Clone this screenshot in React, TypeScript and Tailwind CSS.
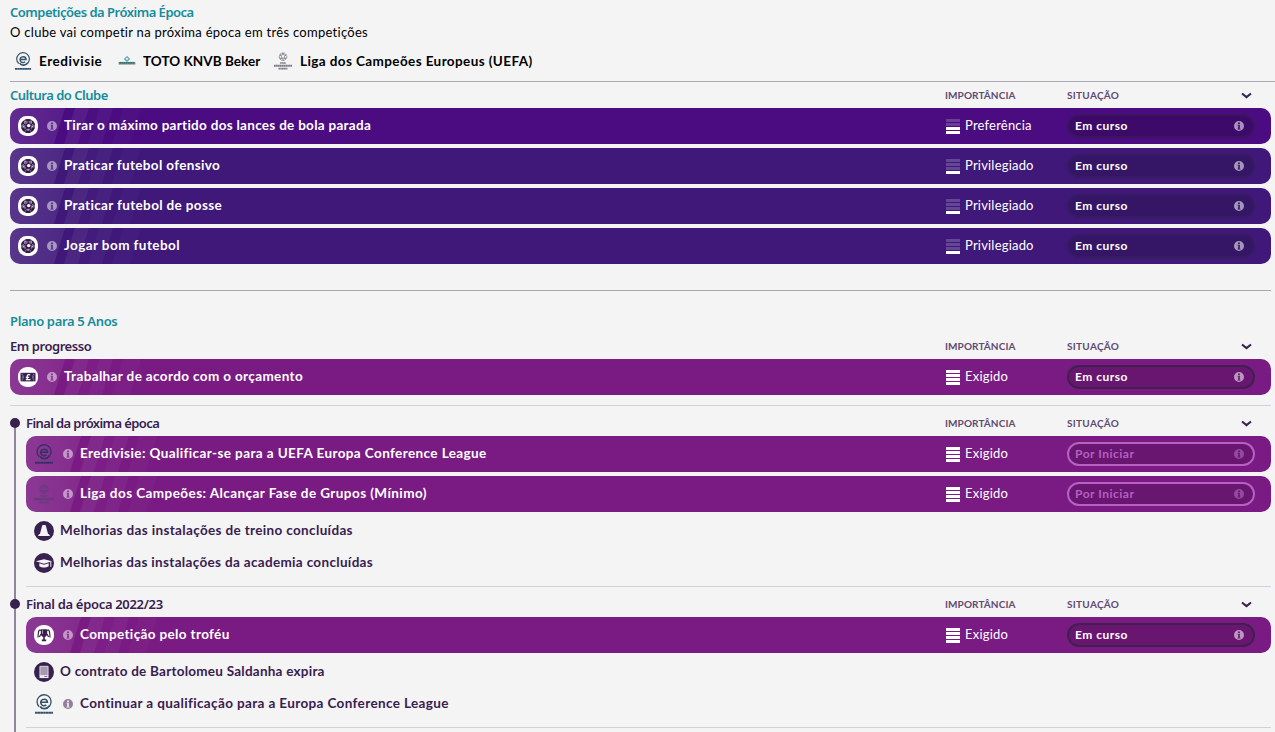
import type { ReactNode } from "react";

type Level = 1 | 2 | 3 | 4;
type Tone = "violet" | "indigo" | "purple";

interface GoalRowProps {
  icon: ReactNode;
  label: string;
  tracking: string;
  tone: Tone;
  importance: string;
  level: Level;
  pending?: boolean;
}

const rowTones: Record<Tone, string> = {
  violet: "bg-[#4a0c80]",
  indigo: "bg-[#3f187a]",
  purple: "bg-[#7a1b84]",
};

const pillTones: Record<Tone, string> = {
  violet: "bg-[#3d0a6a] border-[#38175f]",
  indigo: "bg-[#351566] border-[#371b60]",
  purple: "bg-[#681670] border-[#40204f]",
};

function InfoIcon({ className }: { className: string }) {
  return (
    <svg viewBox="0 0 10 10" className={`size-2.5 shrink-0 ${className}`}>
      <path
        fillRule="evenodd"
        fill="currentColor"
        d="M5 0a5 5 0 1 1 0 10A5 5 0 0 1 5 0ZM4.1 1.4v1.5h1.8V1.4ZM3.5 3.8v.8h.7v3.1h-.7v.9h3v-.9h-.7V3.8Z"
      />
    </svg>
  );
}

function BallIcon() {
  return (
    <svg viewBox="0 0 20 20" className="size-5 shrink-0">
      <rect width="20" height="20" rx="8.5" fill="#fff" />
      <circle cx="10" cy="10" r="7" fill="#7a6789" />
      <g fill="#32194a">
        <path d="m10.4 6.6 3.2 2.4-1.2 3.8H8.4L7.2 9Z" />
        <path d="m6.5 3.9 3.5 1.5 3.5-1.5Q10 1.9 6.5 3.9ZM3 9.5l3-1.9.5-3.4Q3 6 3 9.5ZM17 9.5l-3-1.9-.5-3.4Q17 6 17 9.5ZM3.1 11.2l2.9.6 1.2 2.9-.9 1.3q-2.8-2-3.2-4.8ZM16.9 11.2l-2.9.6-1.2 2.9.9 1.3q2.8-2 3.2-4.8ZM8 14.4h4l.8 2q-2.8 1.2-5.6 0Z" />
      </g>
      <path d="M10.3 5.5v1.6M6 8.2l1.6.9M14 8.2l-1.2.9M7.2 14l1.1-1.6M12.8 14l-.8-1.6" stroke="#32194a" strokeWidth="1" />
      <circle cx="10.7" cy="9.6" r="1.7" fill="#fff" />
      <path d="m6.2 6.2 1.3-.6M13 5.6l1 .7M5 10.6l1.2.4M13.7 11l1.2-.4M9.5 14h1.5" stroke="#e9e4ed" strokeWidth=".8" />
    </svg>
  );
}

function MoneyIcon() {
  return (
    <svg viewBox="0 0 20 20" className="size-5 shrink-0">
      <rect width="20" height="20" rx="9" fill="#fff" />
      <rect x="2.5" y="5.8" width="15" height="8.6" fill="#38204f" />
      <path d="M3.6 7.2h1.2M3.6 13h1.2M15.2 7.2h1.2M15.2 13h1.2M5 8.4v3.4M15 8.4v3.4" stroke="#b6aac0" strokeWidth=".9" />
      <path d="M12 8.3c-.5-1.1-2.8-1-2.8.7v3.4M7.8 10.3h3.4M7.8 12.6h4.6" fill="none" stroke="#fff" strokeWidth="1.2" />
    </svg>
  );
}

function EredivisieLogo({ dim = false, small = false }: { dim?: boolean; small?: boolean }) {
  return (
    <svg
      viewBox="0 0 20 20"
      className={`shrink-0 ${small ? "mx-px size-[18px]" : "size-5"} ${dim ? "text-[#353065]" : "text-[#365269]"}`}
    >
      <g fill="none" stroke="currentColor">
        <path d="M5.2 12.8A7 7 0 1 1 15.6 12" strokeWidth="1.3" />
        <path d="M10 5.2a3.3 3.3 0 1 0 2.3 5.7M7 8.3h6.4A3.3 3.3 0 0 0 10 5.2" strokeWidth="1.6" />
        <path d="M6.2 12.4c2.2 3.4 7 2.8 9.3-.6" strokeWidth="1.9" />
      </g>
      <path d="M1 18.7h18" stroke="currentColor" strokeWidth="1.9" strokeDasharray="2.6 .15" />
    </svg>
  );
}

function ChampionsLogo({ dim = false, small = false }: { dim?: boolean; small?: boolean }) {
  return (
    <svg
      viewBox="0 0 20 20"
      className={`shrink-0 ${small ? "mx-px size-[18px]" : "size-5"} ${dim ? "text-[#633c7c]" : "text-[#77777f]"}`}
    >
      <circle cx="10" cy="5.2" r="4.2" fill="none" stroke="currentColor" strokeWidth=".9" strokeDasharray="2 .5" />
      <path
        d="m10 1.2 1 2.2h2.2l-1.6 1.7.8 2.6-2.4-1.2-2.4 1.2.8-2.6-1.6-1.7H9ZM6 6.2l1.6 1.5M14 6.2l-1.6 1.5M10 7v2.5"
        fill="none"
        stroke="currentColor"
        strokeWidth=".9"
      />
      <path d="M6.8 12.2h6.4" stroke="currentColor" strokeWidth="1.8" strokeDasharray="1.7 .3" />
      <path d="M0 15.2h20" stroke="currentColor" strokeWidth="2.2" strokeDasharray="1.8 .3" />
      <path d="M5 18.4h10" stroke="currentColor" strokeWidth="1.9" strokeDasharray="1.6 .3" />
    </svg>
  );
}

function KnvbLogo() {
  return (
    <svg viewBox="0 0 20 20" className="mx-px size-[18px] shrink-0">
      <path d="m10 5.2 2.6 2.5-2.6 2.5-2.6-2.5Z" fill="#d9edf2" stroke="#4ba2bb" strokeWidth="1.2" />
      <path d="M.7 11h18.6v3H.7Z" fill="#769b91" />
      <path d="M1.5 12.2h17" stroke="#315e58" strokeWidth="1.4" strokeDasharray="2 .4" />
    </svg>
  );
}

function ConeIcon() {
  return (
    <svg viewBox="0 0 20 20" className="size-5 shrink-0">
      <circle cx="10" cy="10" r="10" fill="#38204f" />
      <path d="m8.8 4-.6.6-2.2 8.2-1.7 1.3v.9h11.4v-.9L14 12.8l-2.2-8.2-.6-.6Z" fill="#f5f3f7" />
    </svg>
  );
}

function AcademyIcon() {
  return (
    <svg viewBox="0 0 20 20" className="size-5 shrink-0">
      <circle cx="10" cy="10" r="10" fill="#38204f" />
      <path d="M1.8 8.3 10 6.2l8.2 2.1-8.2 2.5ZM5.3 10.3l4.7 1.4 4.7-1.4v3c-2.5 1.6-7 1.6-9.4 0Z" fill="#f5f3f7" />
      <path d="M16.8 8.8v5" stroke="#f5f3f7" strokeWidth="1" />
    </svg>
  );
}

function TrophyIcon() {
  return (
    <svg viewBox="0 0 20 20" className="size-5 shrink-0">
      <rect width="20" height="20" rx="9" fill="#fff" />
      <path d="M6.8 4.3h6.4v4.2c0 1.9-1 3-2.4 3.4v2.6h1.4v1.7H7.8v-1.7h1.4v-2.6c-1.4-.4-2.4-1.5-2.4-3.4Z" fill="#38204f" />
      <path d="M7 5.6C4.7 4 4.2 6.5 4 12.5M13 5.6c2.3-1.6 2.8.9 3 6.9M7 9l-1.6 3M13 9l1.6 3" fill="none" stroke="#38204f" strokeWidth="1.2" />
      <path d="M8.5 5.2v3.6" stroke="#b5a8c0" strokeWidth=".9" />
    </svg>
  );
}

function ContractIcon() {
  return (
    <svg viewBox="0 0 20 20" className="size-5 shrink-0">
      <circle cx="10" cy="10" r="10" fill="#38204f" />
      <path d="M5.9 4.3h8.2v9.2H5.9Z" fill="#a699b1" stroke="#eeeaf1" strokeWidth=".8" />
      <path d="M5.5 13.2h9v2.9h-9Z" fill="#eeeaf1" />
      <path d="M10.3 14.5h3" stroke="#756482" strokeWidth=".9" />
    </svg>
  );
}

function ImportanceBars({ level }: { level: Level }) {
  return (
    <div className="mt-px flex w-3.5 shrink-0 flex-col gap-px">
      {[4, 3, 2, 1].map((bar) => (
        <span key={bar} className={`h-[3px] ${bar <= level ? "bg-white" : "bg-white/20"}`} />
      ))}
    </div>
  );
}

// Slanted stripes behind the start of each row
function RowStripes() {
  return (
    <svg viewBox="0 0 136 36" className="absolute inset-y-0 left-0 h-9 w-34">
      <defs>
        <linearGradient id="row-fade">
          <stop offset="0" stopColor="#fff" stopOpacity=".13" />
          <stop offset="1" stopColor="#fff" stopOpacity=".07" />
        </linearGradient>
      </defs>
      <path d="M0 0h55L44 36H0Z" fill="url(#row-fade)" />
      <path d="M65 0h14L68 36H54Z" fill="#fff" fillOpacity=".065" />
      <path d="M89 0h14L92 36H78Z" fill="#fff" fillOpacity=".045" />
      <path d="M79 0h10L78 36H68Z" fill="#fff" fillOpacity=".015" />
      <path d="M113 0h18l-11 36h-18Z" fill="#fff" fillOpacity=".025" />
    </svg>
  );
}

function GoalRow({ icon, label, tracking, tone, importance, level, pending }: GoalRowProps) {
  return (
    <div className={`relative flex h-9 items-center overflow-hidden rounded-[10px] pr-4 pl-2 ${rowTones[tone]}`}>
      <RowStripes />
      <div className="relative flex min-w-0 flex-1 items-center">
        {icon}
        <InfoIcon className="ml-[9px] text-white/50" />
        <span className={`ml-[7px] pb-0.5 whitespace-nowrap text-[13.5px] leading-5 font-bold text-white ${tracking}`}>
          {label}
        </span>
      </div>
      <div className="flex w-[121px] shrink-0 items-center gap-[5px]">
        <ImportanceBars level={level} />
        <span className="pb-0.5 text-[13px] tracking-[0.2px] text-white">{importance}</span>
      </div>
      <div
        className={`flex h-6 w-[188px] shrink-0 items-center justify-between rounded-full border-2 pr-[9px] pl-1.5 ${
          pending ? "border-[#b75fc3] bg-[#681670] text-[#b75fc3]" : `text-white ${pillTones[tone]}`
        }`}
      >
        <span className="text-[12px] font-bold tracking-[0.5px]">{pending ? "Por Iniciar" : "Em curso"}</span>
        <InfoIcon className={pending ? "text-[#934a9e]" : "text-white/55"} />
      </div>
    </div>
  );
}

function SectionHeader({ title, tracking, accent = false }: { title: string; tracking: string; accent?: boolean }) {
  return (
    <div className="flex h-[26px] items-center pr-[19px] text-[#38204f]">
      <h3
        className={`min-w-0 flex-1 font-['Noto_Sans'] text-[13px] font-semibold ${tracking} ${
          accent ? "text-[#148c9b]" : ""
        }`}
      >
        {title}
      </h3>
      <span className="w-[122px] text-[10px] font-bold tracking-[0.1px] text-[#5f4a72]">IMPORTÂNCIA</span>
      <span className="w-[174px] text-[10px] font-bold tracking-[0.3px] text-[#5f4a72]">SITUAÇÃO</span>
      <svg viewBox="0 0 11 7" className="h-[7px] w-[11px]">
        <path d="m1 1.4 4.5 3.7L10 1.4" fill="none" stroke="currentColor" strokeWidth="2" />
      </svg>
    </div>
  );
}

function Milestone({ icon, label, tracking, info }: { icon: ReactNode; label: string; tracking: string; info?: boolean }) {
  return (
    <div className="flex h-8 items-center pl-2">
      {icon}
      {info && <InfoIcon className="ml-[9px] text-[#917f9c]" />}
      <span
        className={`pb-0.5 whitespace-nowrap text-[13.5px] leading-5 font-bold text-[#38204f] ${tracking} ${
          info ? "ml-[7px]" : "ml-1.5"
        }`}
      >
        {label}
      </span>
    </div>
  );
}

export default function App() {
  const culture: GoalRowProps[] = [
    { icon: <BallIcon />, label: "Tirar o máximo partido dos lances de bola parada", tracking: "tracking-[0.29px]", tone: "violet", importance: "Preferência", level: 2 },
    { icon: <BallIcon />, label: "Praticar futebol ofensivo", tracking: "tracking-[0.34px]", tone: "indigo", importance: "Privilegiado", level: 1 },
    { icon: <BallIcon />, label: "Praticar futebol de posse", tracking: "tracking-[0.36px]", tone: "indigo", importance: "Privilegiado", level: 1 },
    { icon: <BallIcon />, label: "Jogar bom futebol", tracking: "tracking-[0.43px]", tone: "indigo", importance: "Privilegiado", level: 1 },
  ];

  return (
    <main className="h-[732px] w-[1275px] overflow-hidden bg-[#f4f4f4] pr-1 pl-2.5 font-[Lato,sans-serif] leading-5">
      {/* Competitions */}
      <section className="-mr-1 h-[82px] border-b border-[#aaa7b2] pt-[2px] text-[13.5px] text-black">
        <h2 className="font-['Noto_Sans'] text-[13px] font-semibold tracking-[-0.5px] text-[#148c9b]">
          Competições da Próxima Época
        </h2>
        <p className="text-[13px] tracking-[0.28px]">O clube vai competir na próxima época em três competições</p>
        <div className="mt-[9px] flex items-center pl-[3px] font-bold">
          <EredivisieLogo small />
          <span className="ml-1.5 w-[78px] whitespace-nowrap tracking-[0.55px]">Eredivisie</span>
          <KnvbLogo />
          <span className="ml-1.5 w-[130px] whitespace-nowrap tracking-[0.04px]">TOTO KNVB Beker</span>
          <ChampionsLogo small />
          <span className="ml-[7px] whitespace-nowrap tracking-[0.4px]">Liga dos Campeões Europeus (UEFA)</span>
        </div>
      </section>

      {/* Club culture */}
      <section className="h-[209px] border-b border-[#aaa7b2]">
        <SectionHeader title="Cultura do Clube" tracking="tracking-[-0.5px]" accent />
        <div className="flex flex-col gap-1">
          {culture.map((goal) => (
            <GoalRow key={goal.label} {...goal} />
          ))}
        </div>
      </section>

      {/* Five year plan */}
      <section className="pt-5">
        <h2 className="h-[22px] font-['Noto_Sans'] text-[13px] font-semibold tracking-[-0.35px] text-[#148c9b]">Plano para 5 Anos</h2>
        <SectionHeader title="Em progresso" tracking="tracking-[-0.45px]" />
        <GoalRow icon={<MoneyIcon />} label="Trabalhar de acordo com o orçamento" tracking="tracking-[0.37px]" tone="purple" importance="Exigido" level={4} />

        <div className="mt-2.5 border-t border-[#d2d0d8]">
          <div className="relative ml-4 pt-1">
            <span className="absolute top-[17px] -left-3 h-[320px] w-0.5 bg-[#9284a0]" />
            <div className="relative h-[177px] border-b border-[#d2d0d8]">
              <span className="absolute top-2 -left-4 size-2.5 rounded-full bg-[#38204f]" />
              <SectionHeader title="Final da próxima época" tracking="tracking-[-0.6px]" />
              <div className="flex flex-col gap-1">
                <GoalRow icon={<EredivisieLogo dim />} label="Eredivisie: Qualificar-se para a UEFA Europa Conference League" tracking="tracking-[0.4px]" tone="purple" importance="Exigido" level={4} pending />
                <GoalRow icon={<ChampionsLogo dim />} label="Liga dos Campeões: Alcançar Fase de Grupos (Mínimo)" tracking="tracking-[0.43px]" tone="purple" importance="Exigido" level={4} pending />
              </div>
              <div className="mt-[3px]">
                <Milestone icon={<ConeIcon />} label="Melhorias das instalações de treino concluídas" tracking="tracking-[0.35px]" />
                <Milestone icon={<AcademyIcon />} label="Melhorias das instalações da academia concluídas" tracking="tracking-[0.33px]" />
              </div>
            </div>

            <div className="relative h-[141px] border-b border-[#d2d0d8] pt-1">
              <span className="absolute top-3 -left-4 size-2.5 rounded-full bg-[#38204f]" />
              <SectionHeader title="Final da época 2022/23" tracking="tracking-[-0.32px]" />
              <GoalRow icon={<TrophyIcon />} label="Competição pelo troféu" tracking="tracking-[0.36px]" tone="purple" importance="Exigido" level={4} />
              <div className="mt-[3px]">
                <Milestone icon={<ContractIcon />} label="O contrato de Bartolomeu Saldanha expira" tracking="tracking-[0.24px]" />
                <Milestone icon={<EredivisieLogo />} label="Continuar a qualificação para a Europa Conference League" tracking="tracking-[0.37px]" info />
              </div>
            </div>
          </div>
        </div>
      </section>
    </main>
  );
}
